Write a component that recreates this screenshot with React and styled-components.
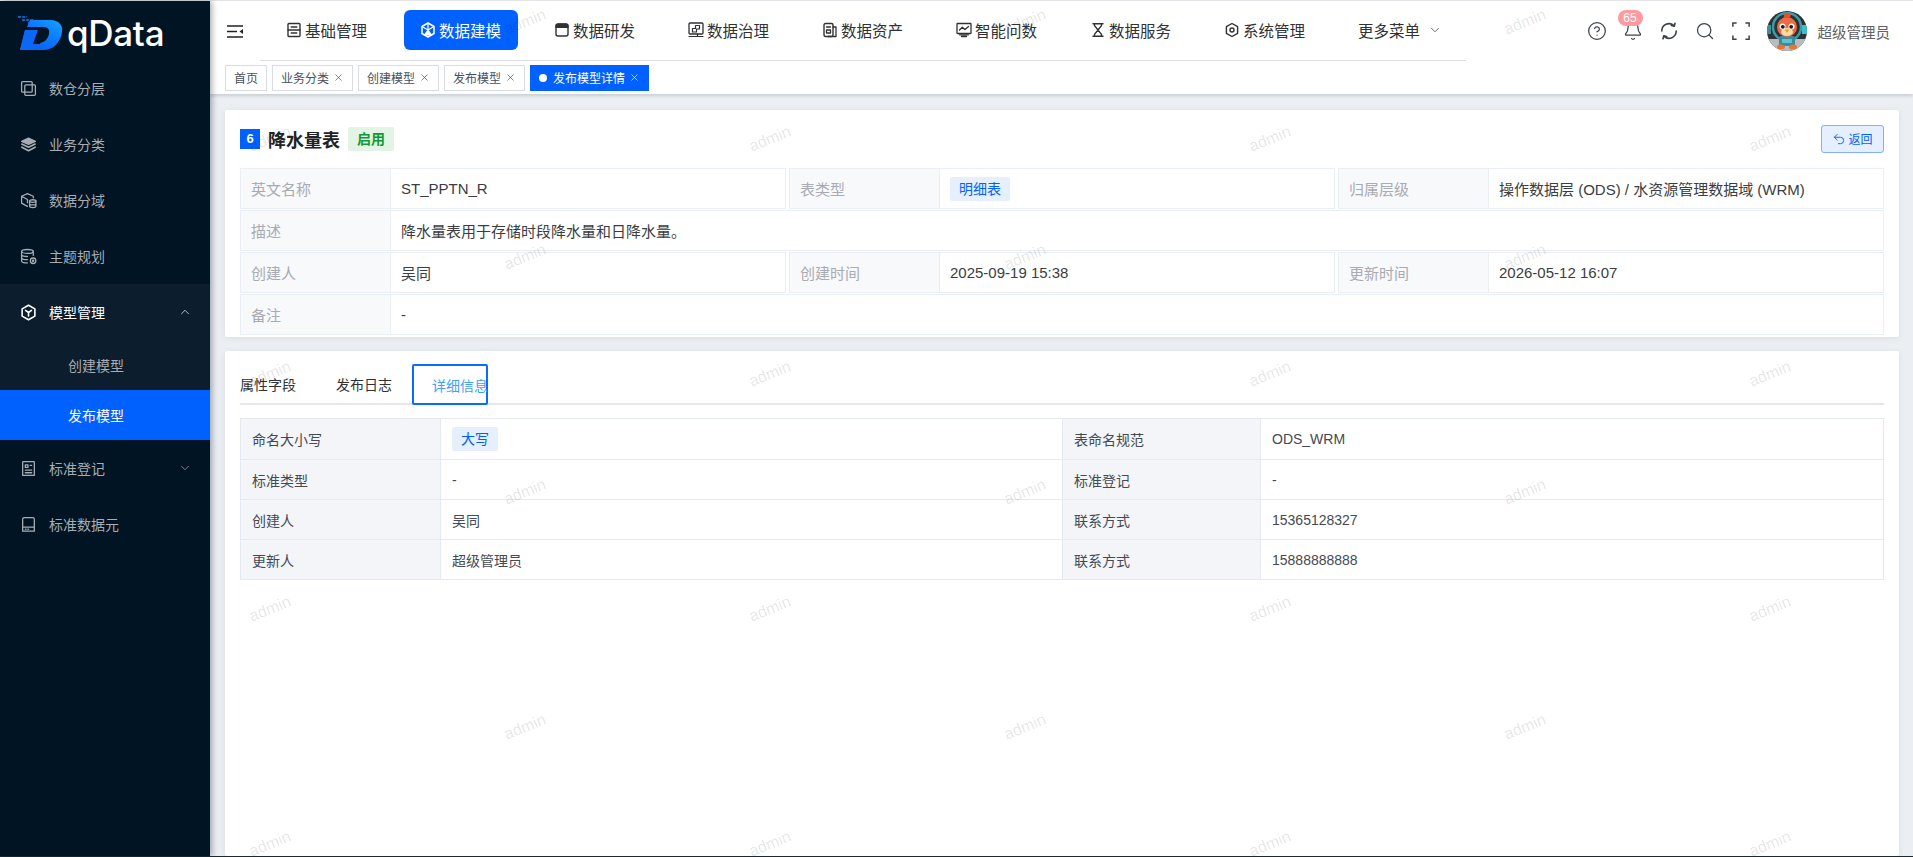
import React from 'react';
import styled, { createGlobalStyle } from 'styled-components';
import { Bell, ChevronDown, ChevronUp, CircleHelp, Search, Undo2, X } from 'lucide-react';

const GlobalStyle = createGlobalStyle`
  html, body, #root {
    margin: 0;
    height: 100%;
  }
  body {
    overflow: hidden;
    font-family: "Liberation Sans", "Noto Sans CJK SC", sans-serif;
    color: #303133;
  }
  * {
    box-sizing: border-box;
  }
`;

const Shell = styled.div`
  display: flex;
  height: 100vh;
  border-top: 1px solid #e2e4e8;
  border-bottom: 1px solid #1a2a33;
  background: #ebeef2;
`;

const Sidebar = styled.aside`
  position: relative;
  z-index: 3;
  flex: none;
  width: 210px;
  background: #001423;
  box-shadow: 2px 0 6px rgba(0, 21, 41, 0.35);
`;

const LogoRow = styled.div`
  display: flex;
  align-items: center;
  height: 59px;
  padding: 4px 0 0 17px;
  gap: 4px;
`;

const LogoText = styled.span`
  font-family: "Inter", sans-serif;
  font-size: 35px;
  font-weight: 500;
  letter-spacing: -0.3px;
  color: #fff;
`;

const MenuItem = styled.div`
  display: flex;
  align-items: center;
  height: 56px;
  padding-left: 20px;
  gap: 12px;
  font-size: 14px;
  color: ${props => props.$open ? '#fff' : '#a7adb3'};
  background: ${props => props.$open ? '#0c1e2e' : 'transparent'};
`;

const MenuArrow = styled.span`
  display: flex;
  margin-left: auto;
  margin-right: 18px;
`;

const SubItem = styled.div`
  display: flex;
  align-items: center;
  height: 50px;
  padding-left: 68px;
  font-size: 14px;
  color: ${props => props.$active ? '#fff' : '#a7adb3'};
  background: ${props => props.$active ? '#0061ff' : '#0c1e2e'};
`;

const Main = styled.div`
  position: relative;
  flex: 1;
  min-width: 0;
  display: flex;
  flex-direction: column;
  overflow: hidden;
`;

const Header = styled.header`
  display: flex;
  flex: none;
  height: 60px;
  background: #fff;
  box-shadow: 0 1px 3px rgba(0, 21, 41, 0.06);
`;

const Toggle = styled.div`
  display: flex;
  flex: none;
  align-items: center;
  width: 50px;
  padding-left: 17px;
`;

const NavMenu = styled.nav`
  display: flex;
  flex: none;
  align-items: center;
  gap: 20px;
  width: 1206px;
  padding: 0 0 1px 10px;
  border-bottom: 1px solid #dcdfe6;
`;

const NavItem = styled.div`
  display: flex;
  flex: none;
  align-items: center;
  gap: 3px;
  width: ${props => props.$auto ? 'auto' : '114px'};
  height: 40px;
  padding: 0 16px;
  border-radius: 6px;
  font-size: 15.5px;
  white-space: nowrap;
  color: ${props => props.$active ? '#fff' : '#303133'};
  background: ${props => props.$active ? '#0061ff' : 'transparent'};
`;

const HeaderRight = styled.div`
  flex: 1;
  display: flex;
  align-items: center;
  justify-content: flex-end;
  gap: 16px;
  padding-right: 23px;
  color: #3c4248;
`;

const BellWrap = styled.span`
  position: relative;
  display: flex;
`;

const Badge = styled.span`
  position: absolute;
  top: -11px;
  left: -5px;
  width: 25px;
  height: 16px;
  border-radius: 8px;
  background: #ff9a9f;
  color: #fff;
  font-size: 12px;
  line-height: 16px;
  text-align: center;
`;

const UserName = styled.span`
  margin-left: -5px;
  font-size: 14.5px;
  color: #606266;
`;

const TabBar = styled.div`
  display: flex;
  flex: none;
  align-items: center;
  gap: 5px;
  height: 33px;
  padding-left: 15px;
  background: #fff;
  box-shadow: 0 2px 3px rgba(0, 21, 41, 0.14);
`;

const Tab = styled.div`
  display: flex;
  align-items: center;
  gap: 4px;
  height: 26px;
  padding: 0 8px;
  border: 1px solid ${props => props.$active ? '#0061ff' : '#d8dce5'};
  font-size: 12px;
  color: ${props => props.$active ? '#fff' : '#495060'};
  background: ${props => props.$active ? '#0061ff' : '#fff'};
`;

const TabDot = styled.span`
  width: 8px;
  height: 8px;
  margin-right: 2px;
  border-radius: 50%;
  background: #fff;
`;

const Content = styled.div`
  flex: 1;
  display: flex;
  flex-direction: column;
  gap: 14px;
  padding: 16px 14px 0 15px;
`;

const Card = styled.section`
  flex: ${props => props.$grow ? 1 : 'none'};
  padding: ${props => props.$grow ? '14px 15px' : '16px 15px 2px'};
  border-radius: 2px;
  background: #fff;
  box-shadow: 0 1px 6px rgba(0, 21, 41, 0.08);
`;

const TitleRow = styled.div`
  display: flex;
  align-items: center;
  height: 25px;
  margin: 0 0 17px;
`;

const TitleIndex = styled.span`
  width: 20px;
  height: 20px;
  background: #0061ff;
  color: #fff;
  font-size: 13px;
  font-weight: 700;
  line-height: 20px;
  text-align: center;
`;

const Title = styled.h2`
  margin: 0 8px;
  font-size: 18px;
  font-weight: 700;
  color: #222;
`;

const StatusTag = styled.span`
  padding: 0 9px;
  height: 24px;
  border-radius: 2px;
  background: #e3f4e6;
  color: #0e9a35;
  font-size: 14px;
  font-weight: 700;
  line-height: 24px;
`;

const BackButton = styled.button`
  display: flex;
  align-items: center;
  justify-content: center;
  gap: 2px;
  width: 63px;
  height: 28px;
  margin-left: auto;
  padding: 0;
  border: 1px solid #80b0ff;
  border-radius: 3px;
  background: #e6efff;
  color: #0061ff;
  font: inherit;
  font-size: 12px;
`;

const DescTable = styled.div`
  display: flex;
  flex-direction: column;
  gap: 1px;
`;

const DescRow = styled.div`
  display: flex;
  gap: 3px;
  height: 41px;
`;

const DescPair = styled.div`
  flex: 1;
  display: flex;
  border: 1px solid #e9eef7;
`;

const DescLabel = styled.div`
  flex: none;
  display: flex;
  align-items: center;
  width: 150px;
  padding-left: 10px;
  border-right: 1px solid #e9eef7;
  background: #f8f9fa;
  color: #a8abb2;
  font-size: 15px;
`;

const DescValue = styled.div`
  flex: 1;
  display: flex;
  align-items: center;
  padding-left: 10px;
  color: #3a3d42;
  font-size: 15px;
`;

const BlueTag = styled.span`
  height: 24px;
  padding: 0 9px;
  border-radius: 2px;
  background: #e6effe;
  color: #0061ff;
  font-size: 14px;
  line-height: 24px;
`;

const TabsNav = styled.div`
  display: flex;
  align-items: stretch;
  height: 40px;
  border-bottom: 2px solid #e4e7ed;
  font-size: 14px;
`;

const TabsItem = styled.div`
  display: flex;
  align-items: center;
  padding: ${props => props.$first ? '0 20px 0 0' : props.$focused ? '0 0 0 18px' : '0 20px'};
  width: ${props => props.$focused ? '76px' : 'auto'};
  height: ${props => props.$focused ? '41px' : 'auto'};
  margin-top: ${props => props.$focused ? '-1px' : '0'};
  border: ${props => props.$focused ? '2px solid #0a6cff' : 'none'};
  border-radius: 2px;
  white-space: nowrap;
  color: ${props => props.$focused ? '#409eff' : '#303133'};
`;

const DetailTable = styled.div`
  display: grid;
  grid-template-columns: 200px 622px 198px 1fr;
  margin-top: 13px;
  border-top: 1px solid #e4e9f2;
  border-left: 1px solid #e4e9f2;
`;

const DetailCell = styled.div`
  display: flex;
  align-items: center;
  height: ${props => props.$tall ? 41 : 40}px;
  padding-left: 11px;
  border-right: 1px solid #e4e9f2;
  border-bottom: 1px solid #e4e9f2;
  background: ${props => props.$label ? '#f3f5f8' : '#fff'};
  color: #454a52;
  font-size: 14px;
`;

const WatermarkLayer = styled.div`
  position: absolute;
  inset: 0;
  z-index: 2;
  overflow: hidden;
  pointer-events: none;
`;

const WatermarkRow = styled.div`
  display: flex;
  gap: 440px;
  height: 117.5px;
  padding-left: ${props => props.$shift ? 285 : 30}px;

  &:first-child {
    margin-top: -38px;
  }
`;

const Watermark = styled.span`
  flex: none;
  align-self: center;
  width: 60px;
  color: rgba(0, 0, 0, 0.11);
  font-size: 16px;
  text-align: center;
  transform: rotate(-22deg);
`;

const Icon = ({ size = 16, children }) => (
  <svg width={size} height={size} viewBox="0 0 16 16" fill="none" stroke="currentColor" strokeWidth="1.2" strokeLinecap="round" strokeLinejoin="round" style={{ flex: 'none' }}>
    {children}
  </svg>
);

const icons = {
  layers: <Icon size={17}><rect x="1.5" y="1.5" width="10" height="10" rx="1" /><rect x="4.5" y="4.5" width="10" height="10" rx="1" /></Icon>,
  stack: <Icon size={17}><path d="M8 2 14.5 5 8 8 1.5 5Z" fill="currentColor" /><path d="M1.8 7.6 8 10.6l6.2-3M1.8 10.6 8 13.8l6.2-3.2" strokeWidth="1.6" /></Icon>,
  cubeDb: <Icon size={17}><path d="M7 1.5 12.5 4v1.5M7 1.5 1.5 4v6.5L7 13.5M1.5 4 7 7v3" /><ellipse cx="12" cy="8.5" rx="3" ry="1.2" /><path d="M9 8.5v5c0 .7 1.3 1.2 3 1.2s3-.5 3-1.2v-5M9 11c0 .7 1.3 1.2 3 1.2s3-.5 3-1.2" /></Icon>,
  dbGear: <Icon size={17}><ellipse cx="7" cy="3.2" rx="5.500" ry="1.800" /><path d="M1.500 3.200v9c0 1 2.400 1.800 5.500 1.800M12.500 3.200V7M1.500 6.200C1.500 7.200 4 8 7 8M1.500 9.200c0 1 2.400 1.800 5.500 1.800" /><circle cx="12.300" cy="12" r="2.600" /><circle cx="12.300" cy="12" r=".6" fill="currentColor" /></Icon>,
  hexY: <Icon size={17}><path d="M8 1.200 14 4.600v6.800l-6 3.400-6-3.400V4.600Z" strokeWidth="1.500" /><path d="M5.200 6 8 8l2.800-2M8 8v3.400" strokeWidth="1.500" /></Icon>,
  register: <Icon size={17}><rect x="2.500" y="1.500" width="11" height="13" rx=".5" /><path d="M5 4.500h2.500V7H5ZM5 9.500h6M5 12h6M9.500 5H11" /></Icon>,
  element: <Icon size={17}><path d="M4 1.500h8A1.500 1.500 0 0 1 13.500 3v7.500h-11V3A1.500 1.500 0 0 1 4 1.500ZM2.500 10.500h11v3.800h-11Z" /><path d="M5 12.400h.8M7.400 12.400h.8" /></Icon>,
  base: <Icon><rect x="2" y="1.500" width="12" height="13" rx="1" strokeWidth="1.400" /><path d="M5.200 5h5.600M2 8h12M5.200 11h5.600" strokeWidth="1.400" /></Icon>,
  model: <Icon><path d="M8 1 14 4.500v7L8 15l-6-3.500v-7Z" strokeWidth="1.500" /><path d="M8 8V1.500M8 8l5.500-3.200M8 8 2.500 4.800M8 8l-3.500 5M8 8l3.500 5" strokeWidth="1.200" /><path d="M5 13h6L8 9Z" fill="currentColor" /></Icon>,
  dev: <Icon><path d="M4 2h8a2 2 0 0 1 2 2v1.500H2V4a2 2 0 0 1 2-2Z" fill="currentColor" /><rect x="2" y="2" width="12" height="12" rx="2" strokeWidth="1.400" /></Icon>,
  govern: <Icon><rect x="1" y="1" width="14" height="11" rx="1" strokeWidth="1.300" /><path d="M4.500 10V6.500H7.500V3.500H11.500V7H8.500V10H4.500M1 14.500h14M9.500 12v2.500" strokeWidth="1.200" /></Icon>,
  asset: <Icon><rect x="2" y="1.500" width="9" height="13" rx="1.500" strokeWidth="1.400" /><path d="M11 5h3v9.500H6M4.500 5h4M4.500 8h4v3h-4Z" strokeWidth="1.300" /></Icon>,
  ask: <Icon><rect x="1" y="1.500" width="14" height="10" rx=".5" strokeWidth="1.300" /><path d="m3.500 8 2.800-2.800L9 7.600l3.500-3.200M5.500 14.500h5M3.500 12.800h9" strokeWidth="1.300" /></Icon>,
  service: <Icon><path d="M3 1.800h10M3 14.200h10M4.500 2v1.600L8 8l3.500-4.400V2M4.500 14v-1.600L8 8l3.500 4.400V14" strokeWidth="1.400" /></Icon>,
  system: <Icon><path d="M8 1.500 13.600 4.700v6.600L8 14.500l-5.600-3.200V4.700Z" strokeWidth="1.400" /><circle cx="8" cy="8" r="2" strokeWidth="1.400" /></Icon>,
  refresh: <Icon size={20}><path d="M2.200 8a5.800 5.800 0 0 1 9.700-4.300M13.800 8a5.800 5.800 0 0 1-9.700 4.300" strokeWidth="1.300" /><path d="m12.800 1.800-.6 2.400-2.300-.6M3.200 14.200l.6-2.400 2.300.6" strokeWidth="1.300" /></Icon>,
  fullscreen: <Icon size={20}><path d="M1.500 4.500v-3h3M11.500 1.500h3v3M14.500 11.500v3h-3M4.500 14.500h-3v-3" strokeWidth="1.200" strokeLinecap="butt" strokeLinejoin="miter" /></Icon>,
};

const menus = [
  { name: '数仓分层', icon: icons.layers },
  { name: '业务分类', icon: icons.stack },
  { name: '数据分域', icon: icons.cubeDb },
  { name: '主题规划', icon: icons.dbGear },
];

const navs = [
  { name: '基础管理', icon: icons.base },
  { name: '数据建模', icon: icons.model, active: true },
  { name: '数据研发', icon: icons.dev },
  { name: '数据治理', icon: icons.govern },
  { name: '数据资产', icon: icons.asset },
  { name: '智能问数', icon: icons.ask },
  { name: '数据服务', icon: icons.service },
  { name: '系统管理', icon: icons.system },
];

const tabs = ['业务分类', '创建模型', '发布模型'];

const Logo = () => (
  <svg width="46" height="36" viewBox="0 0 46 36">
    <defs>
      <linearGradient id="logoFill" x1="0" y1="1" x2="1" y2="0">
        <stop offset="0" stopColor="#0a55e8" />
        <stop offset="0.55" stopColor="#0a78ff" />
        <stop offset="1" stopColor="#16a4ff" />
      </linearGradient>
    </defs>
    <path d="M1 2h9M5 5h12M11 8h8" stroke="#1677ff" strokeWidth="1.600" strokeDasharray="3 1.200" />
    <path d="M13 5h20c9 0 13 5 12 12-1.500 10-8 18-19 18H3l5-20h8l-3 13h9c5 0 9-4 10-9 .7-4-1-7-5-7H10Z" fill="url(#logoFill)" />
    <path d="M8 15h13l-4 20H3Z" fill="#0a68f5" />
    <path d="M21 15h7l-5 14h-7Z" fill="#001423" />
  </svg>
);

const Avatar = () => (
  <svg width="40" height="40" viewBox="0 0 40 40" style={{ flex: 'none' }}>
    <clipPath id="avatarClip"><circle cx="20" cy="20" r="20" /></clipPath>
    <g clipPath="url(#avatarClip)">
      <rect width="40" height="40" fill="#2c3236" />
      <rect y="28" width="40" height="12" fill="#b9bcbd" />
      <circle cx="20" cy="16" r="14" fill="none" stroke="#3f9aa6" strokeWidth="2.500" />
      <rect x="35" y="14" width="5" height="9" fill="#3cc0cc" />
      <rect x="0" y="14" width="4" height="9" fill="#3f8f98" />
      <rect x="12" y="25" width="16" height="10" rx="2" fill="#3d8a9a" />
      <rect x="15" y="28" width="10" height="4" fill="#58c4d0" />
      <ellipse cx="20" cy="16" rx="10" ry="10" fill="#ee6a45" />
      <path d="M17 7c-1-3 1-5 3-5s3 2 4 1c0 2-1 3-2 4Z" fill="#e2502f" />
      <ellipse cx="20" cy="21" rx="6" ry="4" fill="#f8d9a8" />
      <circle cx="15.500" cy="15.500" r="3" fill="#fff" />
      <circle cx="24.500" cy="15.500" r="3" fill="#fff" />
      <circle cx="15.800" cy="15.800" r="1.900" fill="#1e1a18" />
      <circle cx="24.200" cy="15.800" r="1.900" fill="#1e1a18" />
      <path d="M17.500 18.500h5L20 22Z" fill="#f2a11f" />
      <ellipse cx="14" cy="36" rx="4" ry="2.500" fill="#e8742f" />
      <ellipse cx="26" cy="36" rx="4" ry="2.500" fill="#e8742f" />
    </g>
  </svg>
);

function Watermarks() {
  return (
    <WatermarkLayer>
      {Array.from({ length: 8 }, (_, row) => (
        <WatermarkRow key={row} $shift={row % 2 === 0}>
          {Array.from({ length: row % 2 === 0 ? 3 : 4 }, (_, col) => <Watermark key={col}>admin</Watermark>)}
        </WatermarkRow>
      ))}
    </WatermarkLayer>
  );
}

export default function App() {
  return (
    <Shell>
      <GlobalStyle />
      <Sidebar>
        <LogoRow>
          <Logo />
          <LogoText>qData</LogoText>
        </LogoRow>
        {menus.map(m => (
          <MenuItem key={m.name}>{m.icon}{m.name}</MenuItem>
        ))}
        <MenuItem $open>
          {icons.hexY}模型管理
          <MenuArrow><ChevronUp size={14} strokeWidth={1.2} /></MenuArrow>
        </MenuItem>
        <SubItem>创建模型</SubItem>
        <SubItem $active>发布模型</SubItem>
        <MenuItem>
          {icons.register}标准登记
          <MenuArrow><ChevronDown size={14} strokeWidth={1.2} /></MenuArrow>
        </MenuItem>
        <MenuItem>{icons.element}标准数据元</MenuItem>
      </Sidebar>

      <Main>
        <Header>
          <Toggle>
            <svg width="16" height="13" viewBox="0 0 16 13">
              <path d="M0 1h16M0 6.500h10M0 12h16" stroke="#222" strokeWidth="1.600" />
              <path d="M16 4v5l-3.500-2.500Z" fill="#222" />
            </svg>
          </Toggle>
          <NavMenu>
            {navs.map(n => (
              <NavItem key={n.name} $active={n.active}>{n.icon}{n.name}</NavItem>
            ))}
            <NavItem $auto>
              更多菜单
              <ChevronDown size={14} strokeWidth={1.2} style={{ marginLeft: 5 }} />
            </NavItem>
          </NavMenu>
          <HeaderRight>
            <CircleHelp size={20} strokeWidth={1.5} />
            <BellWrap>
              <Bell size={20} strokeWidth={1.5} />
              <Badge>65</Badge>
            </BellWrap>
            {icons.refresh}
            <Search size={20} strokeWidth={1.5} />
            {icons.fullscreen}
            <Avatar />
            <UserName>超级管理员</UserName>
          </HeaderRight>
        </Header>

        <TabBar>
          <Tab>首页</Tab>
          {tabs.map(t => (
            <Tab key={t}>{t}<X size={11} strokeWidth={1.5} /></Tab>
          ))}
          <Tab $active><TabDot />发布模型详情<X size={11} strokeWidth={1.5} /></Tab>
        </TabBar>

        <Content>
          <Card>
            <TitleRow>
              <TitleIndex>6</TitleIndex>
              <Title>降水量表</Title>
              <StatusTag>启用</StatusTag>
              <BackButton><Undo2 size={14} strokeWidth={1.6} />返回</BackButton>
            </TitleRow>
            <DescTable>
              <DescRow>
                <DescPair><DescLabel>英文名称</DescLabel><DescValue>ST_PPTN_R</DescValue></DescPair>
                <DescPair><DescLabel>表类型</DescLabel><DescValue><BlueTag>明细表</BlueTag></DescValue></DescPair>
                <DescPair><DescLabel>归属层级</DescLabel><DescValue>操作数据层 (ODS) / 水资源管理数据域 (WRM)</DescValue></DescPair>
              </DescRow>
              <DescRow>
                <DescPair><DescLabel>描述</DescLabel><DescValue>降水量表用于存储时段降水量和日降水量。</DescValue></DescPair>
              </DescRow>
              <DescRow>
                <DescPair><DescLabel>创建人</DescLabel><DescValue>吴同</DescValue></DescPair>
                <DescPair><DescLabel>创建时间</DescLabel><DescValue>2025-09-19 15:38</DescValue></DescPair>
                <DescPair><DescLabel>更新时间</DescLabel><DescValue>2026-05-12 16:07</DescValue></DescPair>
              </DescRow>
              <DescRow>
                <DescPair><DescLabel>备注</DescLabel><DescValue>-</DescValue></DescPair>
              </DescRow>
            </DescTable>
          </Card>

          <Card $grow>
            <TabsNav>
              <TabsItem $first>属性字段</TabsItem>
              <TabsItem>发布日志</TabsItem>
              <TabsItem $focused>详细信息</TabsItem>
            </TabsNav>
            <DetailTable>
              <DetailCell $label $tall>命名大小写</DetailCell>
              <DetailCell $tall><BlueTag>大写</BlueTag></DetailCell>
              <DetailCell $label $tall>表命名规范</DetailCell>
              <DetailCell $tall>ODS_WRM</DetailCell>
              <DetailCell $label>标准类型</DetailCell>
              <DetailCell>-</DetailCell>
              <DetailCell $label>标准登记</DetailCell>
              <DetailCell>-</DetailCell>
              <DetailCell $label>创建人</DetailCell>
              <DetailCell>吴同</DetailCell>
              <DetailCell $label>联系方式</DetailCell>
              <DetailCell>15365128327</DetailCell>
              <DetailCell $label>更新人</DetailCell>
              <DetailCell>超级管理员</DetailCell>
              <DetailCell $label>联系方式</DetailCell>
              <DetailCell>15888888888</DetailCell>
            </DetailTable>
          </Card>
        </Content>
        <Watermarks />
      </Main>
    </Shell>
  );
}
